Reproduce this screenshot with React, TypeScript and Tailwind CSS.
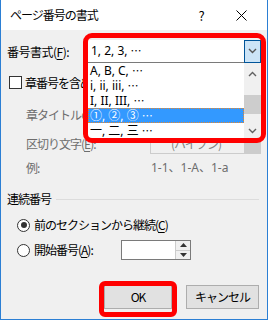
import React from 'react';

const Key = ({ children }: { children: React.ReactNode }) => (
    <span className="underline underline-offset-2">{children}</span>
);

const Chevron = ({ up = false, color = '#333' }: { up?: boolean; color?: string }) => (
    <svg width="9" height="6" viewBox="0 0 9 6">
        <path d={up ? 'M1 5 L4.5 1.5 L8 5' : 'M1 1 L4.5 4.5 L8 1'} fill="none" stroke={color} strokeWidth="1.4" />
    </svg>
);

// ellipsis drawn with the CJK font so the dots sit mid-height, as in the dialog
const Dots = () => <span className="font-['Noto_Sans_CJK_JP',sans-serif] text-[11px]">…</span>;

const formats = ['A, B, C, ', 'i, ii, iii, ', 'I, II, III, ', '①, ②, ③ ', '一, 二, 三 '];

export default function App() {
    return (
        <div className="relative w-[268px] h-[320px] overflow-hidden bg-[#f0f0f0] border-x border-b border-[#2b7fd4] text-[12px] text-black font-['Noto_Sans_CJK_JP','Noto_Sans',sans-serif] leading-none tracking-[-1px]">
            {/* Title bar */}
            <div className="h-[30px] bg-white flex items-center pl-[9px]">
                <span>ページ番号の書式</span>
                <span className="ml-auto w-[12px] text-center text-[13px]">?</span>
                <span className="ml-[29px] mr-[20px] flex items-center">
                    <svg width="11" height="11" viewBox="0 0 11 11">
                        <path d="M0.5 0.5 L10.5 10.5 M10.5 0.5 L0.5 10.5" stroke="#000" strokeWidth="1" />
                    </svg>
                </span>
            </div>

            {/* Body */}
            <div className="flex flex-col">
                <div className="mt-[10px] h-[23px] flex items-center pl-[6px] tracking-[-0.5px]">
                    番号書式(<Key>F</Key>):
                </div>

                <div className="mt-[12px] h-[15px] flex items-center pl-[8px] gap-[3px]">
                    <span className="w-[13px] h-[13px] bg-white border border-[#333] shrink-0" />
                    <span className="w-[61px] overflow-hidden whitespace-nowrap">章番号を含める(<Key>N</Key>)</span>
                </div>

                <div className="mt-[14px] h-[21px] flex items-center pl-[25px] text-[#6d6d6d]">
                    <span className="w-[61px] overflow-hidden whitespace-nowrap">章タイトルのスタイル(<Key>P</Key>):</span>
                </div>

                <div className="mt-[8px] h-[21px] flex items-center pl-[25px] text-[#6d6d6d]">
                    <span className="w-[124px]">区切り文字(<Key>E</Key>):</span>
                    <div className="w-[111px] h-[21px] flex border border-[#cccccc] bg-[#f0f0f0]">
                        <span className="flex-1 flex items-center pl-[20px] text-[#838383]">(ハイフン)</span>
                        <span className="w-[16px] bg-[#cccccc]" />
                    </div>
                </div>

                <div className="mt-[6px] h-[15px] flex items-center pl-[25px] text-[#6d6d6d]">
                    <span className="w-[125px]">例:</span>
                    <span className="font-['Noto_Sans','Noto_Sans_CJK_JP',sans-serif] tracking-normal">1-1、1-A、1-a</span>
                </div>

                <div className="mt-[16px] h-[16px] flex items-center pl-[6px] gap-[5px] pr-[8px]">
                    <span>連続番号</span>
                    <span className="flex-1 h-px bg-[#dcdcdc]" />
                </div>

                <div className="mt-[10px] h-[16px] flex items-center pl-[16px] gap-[4px]">
                    <span className="w-[13px] h-[13px] rounded-full bg-white border border-[#333] flex items-center justify-center">
                        <span className="w-[6px] h-[6px] rounded-full bg-[#333]" />
                    </span>
                    <span>前のセクションから継続(<Key>C</Key>)</span>
                </div>

                <div className="mt-[7px] h-[20px] flex items-center pl-[16px] gap-[4px]">
                    <span className="w-[13px] h-[13px] rounded-full bg-white border border-[#333]" />
                    <span className="w-[83px]">開始番号(<Key>A</Key>):</span>
                    <div className="w-[70px] h-[20px] flex bg-white border border-[#7a7a7a]">
                        <span className="flex-1" />
                        <div className="w-[15px] flex flex-col border-l border-[#cccccc]">
                            <span className="flex-1 flex items-center justify-center bg-[#f0f0f0] border-b border-[#cccccc]">
                                <svg width="7" height="4" viewBox="0 0 7 4"><path d="M0 4 L3.5 0 L7 4 Z" fill="#333" /></svg>
                            </span>
                            <span className="flex-1 flex items-center justify-center bg-[#f0f0f0]">
                                <svg width="7" height="4" viewBox="0 0 7 4"><path d="M0 0 L3.5 4 L7 0 Z" fill="#333" /></svg>
                            </span>
                        </div>
                    </div>
                </div>

                <div className="mt-[25px] flex justify-end pr-[8px] gap-[14px]">
                    <div className="relative">
                        <button className="w-[68px] h-[24px] bg-[#e1e1e1] border border-[#adadad] flex items-center justify-center">
                            OK
                        </button>
                        <span className="absolute left-[-5px] right-[-5px] top-[-4px] bottom-[-8px] border-[5px] border-[#ff0000] rounded-[6px]" />
                    </div>
                    <button className="w-[73px] h-[24px] bg-[#e1e1e1] border border-[#adadad] flex items-center justify-center">
                        キャンセル
                    </button>
                </div>
            </div>

            {/* Open dropdown of the number format combobox */}
            <div className="absolute left-[85px] top-[40px] w-[175px] flex flex-col bg-white tracking-normal">
                <div className="h-[23px] flex items-center border-b border-[#7a7a7a]">
                    <span className="flex-1 pl-[5px] font-['Noto_Sans','Noto_Sans_CJK_JP',sans-serif]">1, 2, 3, <Dots /></span>
                    <span className="w-[17px] h-[23px] flex items-center justify-center bg-[#cce4f7] border border-[#005499]">
                        <Chevron color="#555" />
                    </span>
                </div>
                <div className="flex h-[76px]">
                    <div className="flex-1 flex flex-col pl-[2px] font-['Noto_Sans','Noto_Sans_CJK_JP',sans-serif]">
                        {formats.map((f, i) => (
                            <div
                                key={f}
                                className={
                                    i === 3
                                        ? 'h-[15px] flex items-center pl-[1px] bg-[#3399ff] text-white border border-dotted border-[#e8862a] whitespace-pre'
                                        : 'h-[15px] flex items-center pl-[2px] whitespace-pre'
                                }
                            >
                                {f}
                                <Dots />
                            </div>
                        ))}
                    </div>
                    <div className="w-[17px] bg-[#f0f0f0] flex flex-col items-center">
                        <span className="h-[17px] flex items-center justify-center mt-[2px]">
                            <Chevron up color="#606060" />
                        </span>
                        <span className="mt-[13px] w-full h-[19px] bg-[#cdcdcd]" />
                        <span className="mt-[8px] h-[17px] flex items-center justify-center">
                            <Chevron color="#606060" />
                        </span>
                    </div>
                </div>
            </div>

            {/* Red highlight around the combobox */}
            <span className="absolute left-[82px] top-[33px] w-[183px] h-[110px] border-[5px] border-[#ff0000] rounded-[9px]" />
        </div>
    );
}
